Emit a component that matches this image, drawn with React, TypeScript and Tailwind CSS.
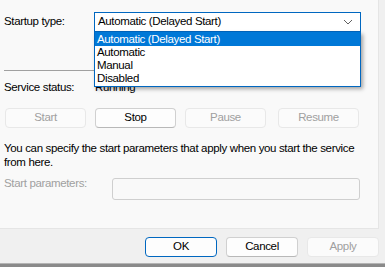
import React from "react";

const font = { fontFamily: '"Liberation Sans", Arial, sans-serif', letterSpacing: "-0.35px" };

function Btn({ children, disabled, primary, className = "" }: { children: React.ReactNode; disabled?: boolean; primary?: boolean; className?: string }) {
  const base = "h-[20px] flex items-center justify-center rounded-[4px] text-[11.5px] leading-none ";
  const look = disabled
    ? "bg-[#fbfbfb] border border-[#e8e8e8] text-[#a0a0a0]"
    : primary
    ? "bg-[#fdfdfd] border-[1.5px] border-[#0067c0] text-black"
    : "bg-[#fdfdfd] border border-[#d0d0d0] border-b-[#b8b8b8] text-black";
  return <div className={base + look + " " + className}>{children}</div>;
}

export default function App() {
  return (
    <div className="relative w-[385px] h-[267px] overflow-hidden bg-[#f0f0f0] flex flex-col text-[11.5px] text-black" style={font}>
      <div className="w-[379px] h-[229px] bg-[#f9f9f9] border-r border-b border-[#e5e5e5] flex flex-col pl-[4px]">
        <div className="mt-[12px] h-[20px] flex items-center">
          <div className="w-[90px] leading-[14px] -mt-[2px]">Startup type:</div>
          <div className="w-[267px] h-[20px] bg-white border border-[#0067c0] flex items-center pl-[3px] pr-[6px] justify-between">
            <span>Automatic (Delayed Start)</span>
            <svg width="10" height="6" viewBox="0 0 10 6" className="mr-[1px]">
              <path d="M1 1 L5 5 L9 1" fill="none" stroke="#606060" strokeWidth="1" />
            </svg>
          </div>
        </div>
        <div className="mt-[38px] h-px w-[357px] bg-[#a0a0a0]" />
        <div className="mt-[10px] h-[14px] flex items-center">
          <div className="w-[91px]">Service status:</div>
          <div>Running</div>
        </div>
        <div className="mt-[13px] flex">
          <Btn disabled className="ml-[1px] w-[81px]">Start</Btn>
          <Btn className="ml-[9px] w-[81px]">Stop</Btn>
          <Btn disabled className="ml-[9px] w-[81px]">Pause</Btn>
          <Btn disabled className="ml-[12px] w-[81px]">Resume</Btn>
        </div>
        <div className="mt-[13px] leading-[14px] w-[360px]">
          You can specify the start parameters that apply when you start the service from here.
        </div>
        <div className="mt-[7px] flex items-start">
          <div className="w-[108px] leading-[14px] text-[#a0a0a0]">Start parameters:</div>
          <div className="mt-[2px] w-[248px] h-[22px] rounded-[3px] border border-[#cfcfcf] bg-[#f9f9f9]" />
        </div>
      </div>
      <div className="flex-1 flex justify-end items-start pt-[8px] pr-[6px]">
        <Btn primary className="w-[72px]">OK</Btn>
        <Btn className="ml-[9px] w-[72px]">Cancel</Btn>
        <Btn disabled className="ml-[9px] w-[72px]">Apply</Btn>
      </div>
      <div className="h-px bg-[#b4b4b4]" />
      <div className="h-[3px] bg-[#8a8a8a]" />

      <div className="absolute left-[94px] top-[32px] w-[267px] h-[55px] bg-white border-x border-b border-[#0067c0] shadow-[2px_2px_4px_rgba(0,0,0,0.35)] flex flex-col">
        <div className="h-[14px] bg-[#0078d7] text-white pl-[2px] leading-[14px]">Automatic (Delayed Start)</div>
        <div className="h-[13px] pl-[2px] leading-[13px]">Automatic</div>
        <div className="h-[13px] pl-[2px] leading-[13px]">Manual</div>
        <div className="h-[13px] pl-[2px] leading-[13px]">Disabled</div>
      </div>
    </div>
  );
}
